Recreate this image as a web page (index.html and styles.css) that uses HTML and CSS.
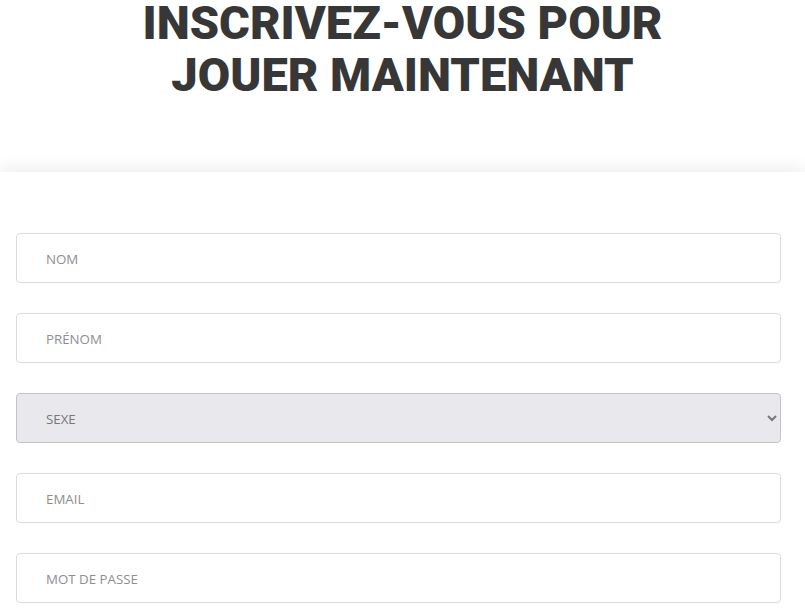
FILE: index.html
```html
<!DOCTYPE html>
<html lang="fr">
<head>
<meta charset="utf-8">
<title>Inscription</title>
<link rel="stylesheet" href="styles.css">
</head>
<body>
<header class="hero">
  <h1 class="hero-title">INSCRIVEZ-VOUS POUR<br>JOUER MAINTENANT</h1>
</header>
<section class="signup">
  <form class="signup-form">
    <input class="field" type="text" placeholder="NOM">
    <input class="field" type="text" placeholder="PRÉNOM">
    <select class="field field-select">
      <option>SEXE</option>
      <option>HOMME</option>
      <option>FEMME</option>
    </select>
    <input class="field" type="email" placeholder="EMAIL">
    <input class="field" type="password" placeholder="MOT DE PASSE">
  </form>
</section>
</body>
</html>
```

FILE: styles.css
```css
html, body {
  margin: 0;
  padding: 0;
  background: #fff;
}
body {
  font-family: "Open Sans", "Liberation Sans", sans-serif;
  overflow: hidden;
}
.hero {
  height: 172px;
  box-sizing: border-box;
  padding-top: 1px;
  text-align: center;
  background: #fff;
}
.hero-title {
  margin: -4px 0 0;
  font-family: Roboto, "Liberation Sans", sans-serif;
  font-weight: 900;
  font-size: 47px;
  line-height: 52px;
  letter-spacing: 0;
  color: #373737;
}
.signup {
  position: relative;
  background: #fff;
  box-shadow: 0 -6px 14px rgba(0, 0, 0, 0.06);
  padding: 61px 24px 0 16px;
}
.signup-form {
  display: flex;
  flex-direction: column;
  gap: 30px;
}
.field {
  box-sizing: border-box;
  width: 100%;
  height: 50px;
  border: 1px solid #dcdcdc;
  border-radius: 4px;
  padding: 2px 29px 0;
  font-family: "Open Sans", "Liberation Sans", sans-serif;
  font-size: 13.3px;
  color: #555;
  background: #fff;
  outline: none;
}
.field::placeholder {
  color: #8e8e8e;
}
.field-select {
  background-color: #e9e9ed;
  border-color: #c4c4c8;
  color: #777;
  padding-left: 25px;
}
```
